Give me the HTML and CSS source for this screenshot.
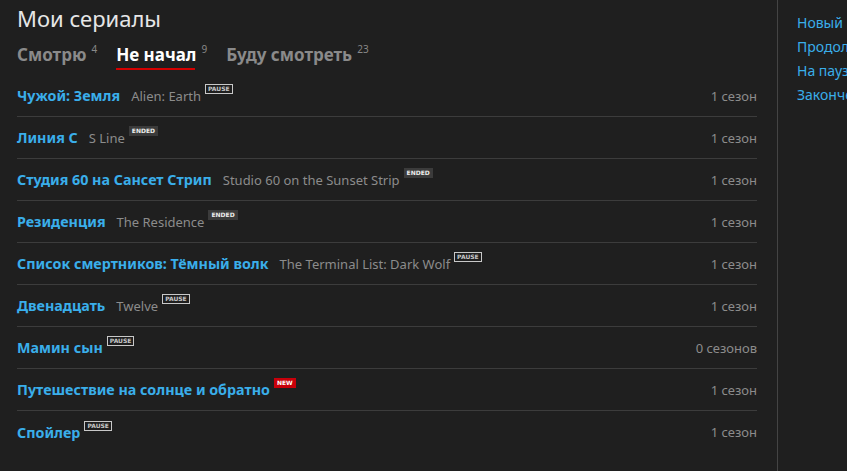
FILE: index.html
```html
<!DOCTYPE html>
<html lang="ru">
<head>
<meta charset="utf-8">
<title>Мои сериалы</title>
<link rel="stylesheet" href="styles.css">
</head>
<body>
<div class="layout">
  <main class="main">
    <h1 class="title">Мои сериалы</h1>
    <nav class="tabs">
      <a class="tab">Смотрю<sup class="count">4</sup></a>
      <a class="tab active">Не начал<sup class="count">9</sup></a>
      <a class="tab">Буду смотреть<sup class="count">23</sup></a>
    </nav>
    <ul class="list">
      <li class="row"><div class="names"><a class="name">Чужой: Земля</a><span class="orig">Alien: Earth</span><span class="badge pause">PAUSE</span></div><span class="seasons">1 сезон</span></li>
      <li class="row"><div class="names"><a class="name">Линия С</a><span class="orig">S Line</span><span class="badge ended">ENDED</span></div><span class="seasons">1 сезон</span></li>
      <li class="row"><div class="names"><a class="name">Студия 60 на Сансет Стрип</a><span class="orig">Studio 60 on the Sunset Strip</span><span class="badge ended">ENDED</span></div><span class="seasons">1 сезон</span></li>
      <li class="row"><div class="names"><a class="name">Резиденция</a><span class="orig">The Residence</span><span class="badge ended">ENDED</span></div><span class="seasons">1 сезон</span></li>
      <li class="row"><div class="names"><a class="name">Список смертников: Тёмный волк</a><span class="orig">The Terminal List: Dark Wolf</span><span class="badge pause">PAUSE</span></div><span class="seasons">1 сезон</span></li>
      <li class="row"><div class="names"><a class="name">Двенадцать</a><span class="orig">Twelve</span><span class="badge pause">PAUSE</span></div><span class="seasons">1 сезон</span></li>
      <li class="row"><div class="names"><a class="name">Мамин сын</a><span class="badge pause">PAUSE</span></div><span class="seasons">0 сезонов</span></li>
      <li class="row"><div class="names"><a class="name">Путешествие на солнце и обратно</a><span class="badge new">NEW</span></div><span class="seasons">1 сезон</span></li>
      <li class="row"><div class="names"><a class="name">Спойлер</a><span class="badge pause">PAUSE</span></div><span class="seasons">1 сезон</span></li>
    </ul>
  </main>
  <aside class="side">
    <a class="side-link">Новый</a>
    <a class="side-link">Продолжается</a>
    <a class="side-link">На паузе</a>
    <a class="side-link">Закончен</a>
  </aside>
</div>
</body>
</html>
```
FILE: styles.css
```css
* { box-sizing: border-box; }
html, body { margin: 0; padding: 0; }
body {
  background: #1f1f1f;
  color: #ddd;
  font-family: "Noto Sans", "Open Sans", sans-serif;
  overflow: hidden;
  height: 471px;
}
.layout {
  display: flex;
  height: 471px;
}
.main {
  width: 778px;
  flex: none;
  border-right: 1px solid #444;
  padding: 0 20px 0 17px;
}
.title {
  margin: 0;
  padding-top: 1px;
  font-size: 22px;
  font-weight: 400;
  line-height: 34px;
  color: #e6e6e6;
}
.tabs {
  display: flex;
  gap: 19px;
  margin-top: 9px;
  height: 31px;
}
.tab {
  font-size: 17px;
  font-weight: 700;
  color: #8a8a8a;
  line-height: 22px;
  position: relative;
}
.tab.active { color: #fff; }
.tab.active::after {
  content: "";
  position: absolute;
  left: 0;
  right: 12px;
  top: 24px;
  height: 2px;
  background: #d40000;
}
.count {
  font-size: 10px;
  font-weight: 400;
  color: #888;
  margin-left: 5px;
  vertical-align: 8px;
  line-height: 0;
}
.list {
  list-style: none;
  margin: 0;
  padding: 0;
}
.row {
  display: flex;
  justify-content: space-between;
  align-items: center;
  height: 42px;
  border-bottom: 1px solid #3c3c3c;
}
.row:last-child { border-bottom: none; }
.names {
  display: flex;
  align-items: center;
}
.name {
  font-size: 14.3px;
  font-weight: 700;
  color: #3aaeea;
}
.orig {
  font-size: 13px;
  color: #8c8c8c;
  margin-left: 11px;
}
.badge {
  font-size: 6px;
  font-weight: 700;
  line-height: 8px;
  padding: 0 2px;
  margin-left: 4px;
  align-self: flex-start;
  margin-top: -2px;
  font-family: "DejaVu Sans", sans-serif;
}
.badge.pause {
  border: 1px solid #c8c8c8;
  color: #c8c8c8;
}
.badge.ended {
  background: #3b3b3b;
  color: #eee;
  padding: 1px 3px;
}
.badge.new {
  background: #c8000a;
  color: #fff;
  padding: 1px 3px;
}
.seasons {
  font-size: 13px;
  color: #8c8c8c;
}
.side {
  display: flex;
  flex-direction: column;
  padding: 11px 0 0 19px;
  white-space: nowrap;
  overflow: hidden;
}
.side-link {
  font-size: 14px;
  line-height: 24px;
  color: #3aaeea;
}
```
